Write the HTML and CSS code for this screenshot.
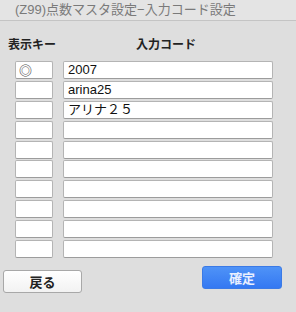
FILE: index.html
```html
<!DOCTYPE html>
<html lang="ja">
<head>
<meta charset="utf-8">
<link rel="stylesheet" href="styles.css">
</head>
<body>
<div class="win">
  <div class="titlebar">(Z99)点数マスタ設定−入力コード設定</div>
  <div class="content">
    <div class="heads">
      <div class="h-key">表示キー</div>
      <div class="h-code">入力コード</div>
    </div>
    <div class="rows">
      <div class="row"><div class="key"><span class="mark">◎</span></div><div class="code">2007</div></div>
      <div class="row"><div class="key"></div><div class="code">arina25</div></div>
      <div class="row"><div class="key"></div><div class="code">アリナ２５</div></div>
      <div class="row"><div class="key"></div><div class="code"></div></div>
      <div class="row"><div class="key"></div><div class="code"></div></div>
      <div class="row"><div class="key"></div><div class="code"></div></div>
      <div class="row"><div class="key"></div><div class="code"></div></div>
      <div class="row"><div class="key"></div><div class="code"></div></div>
      <div class="row"><div class="key"></div><div class="code"></div></div>
      <div class="row"><div class="key"></div><div class="code"></div></div>
    </div>
    <div class="buttons">
      <button class="btn back">戻る</button>
      <button class="btn ok">確定</button>
    </div>
  </div>
</div>
</body>
</html>
```
FILE: styles.css
```css
html, body {
  margin: 0;
  padding: 0;
  background: #dedede;
}
body {
  width: 296px;
  height: 312px;
  overflow: hidden;
  font-family: "Liberation Sans", "Noto Sans CJK JP", sans-serif;
}
.win {
  display: flex;
  flex-direction: column;
}
.titlebar {
  height: 20px;
  line-height: 20px;
  padding-left: 15px;
  font-size: 13px;
  color: #7a7a7a;
  background: #e4e4e4;
  border-bottom: 1px solid #c4c4c4;
  white-space: nowrap;
}
.content {
  display: flex;
  flex-direction: column;
}
.heads {
  display: flex;
  height: 18px;
  margin-top: 15px;
  font-size: 12px;
  font-weight: bold;
  color: #222;
  line-height: 18px;
}
.h-key {
  width: 128px;
  padding-left: 8px;
}
.rows {
  display: flex;
  flex-direction: column;
  gap: 1.9px;
  margin-top: 7px;
  padding-left: 15px;
}
.row {
  display: flex;
  gap: 10px;
  height: 18px;
}
.key, .code {
  box-sizing: border-box;
  height: 18px;
  background: #fff;
  border: 1px solid #b4b4b4;
  border-bottom-color: #9c9c9c;
  border-radius: 2px;
  font-size: 13px;
  line-height: 16px;
  color: #111;
}
.key {
  width: 38px;
  padding-left: 3px;
}
.mark {
  font-family: "Noto Sans CJK JP", sans-serif;
  color: #555;
  font-size: 13px;
  font-weight: bold;
}
.code {
  width: 210px;
  padding-left: 4px;
}
.buttons {
  display: flex;
  justify-content: space-between;
  align-items: flex-start;
  padding: 0 14px 0 3px;
  margin-top: 8px;
}
.btn {
  box-sizing: border-box;
  height: 23px;
  font-family: "Liberation Sans", "Noto Sans CJK JP", sans-serif;
  font-size: 13px;
  padding: 0;
  border-radius: 3px;
}
.back {
  width: 79px;
  margin-top: 4px;
  background: linear-gradient(#ffffff, #f2f2f2);
  border: 1px solid #a8a8a8;
  color: #222;
  font-weight: bold;
}
.ok {
  width: 80px;
  background: linear-gradient(#4f93f7, #3478f2);
  border: 1px solid #3b7ae6;
  color: #e8efff;
  font-weight: bold;
}
```
